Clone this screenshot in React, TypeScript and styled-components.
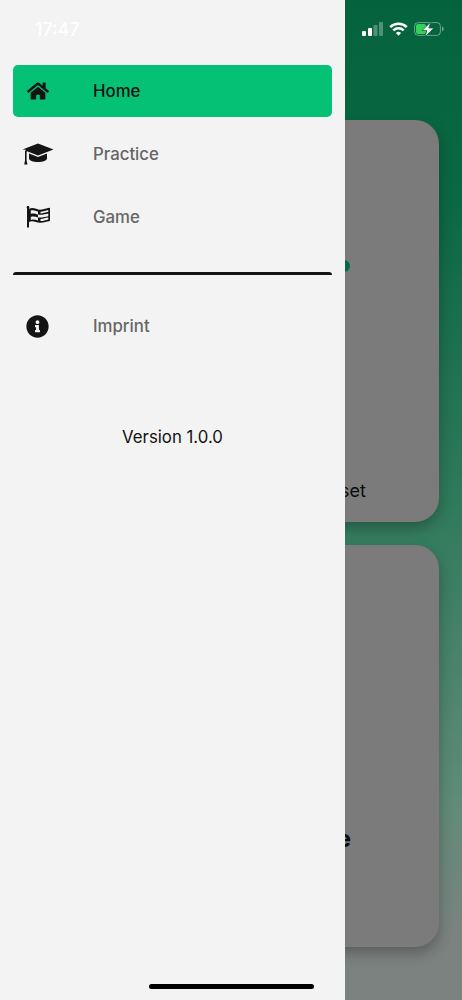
import React from "react";
import styled, { createGlobalStyle } from "styled-components";
import { FaHome, FaInfoCircle } from "react-icons/fa";

const GlobalStyle = createGlobalStyle`
  html, body {
    margin: 0;
    padding: 0;
    background: #7c8280;
  }
`;

const Page = styled.div`
  position: relative;
  width: 462px;
  height: 1000px;
  overflow: hidden;
  font-family: Inter, "Noto Sans", sans-serif;
  background: linear-gradient(180deg, #04633d 0%, #0b6844 20%, #2f7a5c 50%, #5f8b78 80%, #7c8280 94%);
`;

const Main = styled.main`
  display: flex;
  flex-direction: column;
  gap: 23px;
  padding: 120px 23px 0;
`;

const Card = styled.section<{ $bottom: number }>`
  display: flex;
  flex-direction: column;
  align-items: flex-end;
  box-sizing: border-box;
  height: 402px;
  padding-bottom: ${({ $bottom }) => $bottom}px;
  background: #7b7b7b;
  border-radius: 24px;
  box-shadow: 0 6px 14px rgba(0, 0, 0, 0.28);
`;

const Dot = styled.span`
  width: 12px;
  height: 12px;
  margin: 140px 89px 0 0;
  border-radius: 50%;
  background: #056b45;
`;

const ResetLabel = styled.span`
  margin: auto 73px 0 0;
  font-size: 18px;
  line-height: 22px;
  color: #0c0c0c;
`;

const GameLabel = styled.span`
  margin: auto 88px 0 0;
  font-size: 24px;
  line-height: 30px;
  font-weight: 700;
  color: #0c0c0c;
`;

const Drawer = styled.nav`
  position: absolute;
  inset: 0 auto 0 0;
  display: flex;
  flex-direction: column;
  box-sizing: border-box;
  width: 345px;
  padding: 65px 13px 0;
  background: #f3f3f3;
`;

const MenuList = styled.div`
  display: flex;
  flex-direction: column;
  gap: 11px;
`;

const MenuItem = styled.a<{ $active?: boolean }>`
  display: flex;
  align-items: center;
  height: 52px;
  border-radius: 5px;
  font-size: 16.8px;
  font-weight: 500;
  color: ${({ $active }) => ($active ? "#111111" : "#666666")};
  background: ${({ $active }) => ($active ? "#05c175" : "transparent")};
`;

const IconSlot = styled.span`
  display: flex;
  align-items: center;
  justify-content: center;
  flex: none;
  width: 49px;
  margin-right: 31px;
  color: #141414;
`;

const Divider = styled.hr`
  height: 3px;
  margin: 29px 0 25px;
  border: 0;
  border-radius: 3px 3px 0 0;
  background: #141414;
`;

const Version = styled.p`
  margin: 59px 0 0;
  font-size: 16.8px;
  line-height: 52px;
  text-align: center;
  color: #111111;
`;

const StatusBar = styled.div`
  position: absolute;
  inset: 0 0 auto 0;
  display: flex;
  align-items: center;
  justify-content: space-between;
  height: 58px;
  padding: 0 18px 0 35px;
`;

const Time = styled.span`
  font-size: 18px;
  font-weight: 500;
  color: #ffffff;
`;

const StatusIcons = styled.div`
  display: flex;
  align-items: center;
  gap: 6px;
`;

const HomeIndicator = styled.div`
  position: absolute;
  left: 149px;
  bottom: 11px;
  width: 165px;
  height: 5px;
  border-radius: 3px;
  background: #000000;
`;

const Signal = () => (
  <svg width="21" height="14" viewBox="0 0 21 14">
    <rect x="0" y="9" width="4" height="5" rx="1" fill="#fff" />
    <rect x="6" y="6" width="4" height="8" rx="1" fill="#fff" />
    <rect x="11.500" y="3" width="4" height="11" rx="1" fill="#fff" fillOpacity="0.3" />
    <rect x="17" y="0" width="4" height="14" rx="1" fill="#fff" fillOpacity="0.3" />
  </svg>
);

const Wifi = () => (
  <svg width="19" height="14" viewBox="0 0 19 14" fill="none" stroke="#fff" strokeWidth="2.5">
    <path d="M1.200 5.200a11.800 11.800 0 0 1 16.600 0" />
    <path d="M4.300 8.300a7.400 7.400 0 0 1 10.400 0" />
    <path d="M9.500 13.800 6.900 11a3.700 3.700 0 0 1 5.200 0Z" fill="#fff" stroke="none" />
  </svg>
);

const Battery = () => (
  <svg width="30" height="15" viewBox="0 0 30 15">
    <rect x="0.600" y="0.600" width="25.800" height="12.800" rx="3.600" fill="none" stroke="#fff" strokeOpacity="0.4" />
    <rect x="2" y="2" width="10" height="10" rx="2" fill="#34d058" />
    <path d="M28 4.600c1 .3 1.600 1.200 1.600 2.400S29 9.100 28 9.400Z" fill="#fff" fillOpacity="0.45" />
    <path d="M16.800 0 8 8.500h4.800l-1.800 6.500 8.800-9h-5Z" fill="#fff" stroke="#0a6541" strokeWidth="0.8" />
  </svg>
);

const GraduationCap = () => (
  <svg width="32" height="22" viewBox="0 0 32 22" fill="#141414">
    <path d="M16 0.500 31.500 6.500 16 12.500 5 8.300 4 8.800V6.800L0.500 6.500Z" />
    <path d="M7 10.500 16 14 25 10.500V15.500C25 17.400 21 19 16 19S7 17.400 7 15.500Z" />
    <path d="M3 7.500H4.600V17.500L5.500 21.500H2.200L3 17.500Z" />
  </svg>
);

const WavyFlag = () => (
  <svg width="25" height="22" viewBox="-1 0 25 22">
    <path d="M1 0.500H3V21.500H1Z" fill="#141414" />
    <circle cx="2" cy="1.200" r="1.300" fill="#141414" />
    <path
      d="M3 2.800C8 0.400 11 4.600 16 3.600 19 3 21.500 2.200 24 1.800V15C20 15.600 18 17 14 16.800 10 16.600 7 14.200 3 16Z"
      fill="#141414"
    />
    <path d="M4.800 4.600C7.500 3.500 9.500 5 12 5.600V8.400C9.500 7.800 7.500 6.800 4.800 7.800Z" fill="#f3f3f3" />
    <path d="M12 8.400C15.500 9.200 19 8 22.300 7.400V10.200C19 10.800 15.500 12 12 11.400Z" fill="#f3f3f3" />
    <path d="M4.800 11C7.500 10 9.500 11 12 11.400V14.600C9.500 13.800 7.500 13 4.800 14Z" fill="#f3f3f3" />
    <path d="M14.500 5.700C17 5.600 19.800 4.400 22.300 4V5.700C19.800 6.100 17 7.200 14.500 7.400Z" fill="#f3f3f3" />
    <path d="M14.500 13C17 12.900 19.800 11.800 22.300 11.600V13.400C19.800 13.800 17 15 14.500 15Z" fill="#f3f3f3" />
  </svg>
);

const App: React.FC = () => (
  <Page>
    <GlobalStyle />
    <Main>
      <Card $bottom={20}>
        <Dot />
        <ResetLabel>Reset</ResetLabel>
      </Card>
      <Card $bottom={93}>
        <GameLabel>Game</GameLabel>
      </Card>
    </Main>
    <Drawer>
      <MenuList>
        <MenuItem $active>
          <IconSlot>
            <FaHome size={22} />
          </IconSlot>
          Home
        </MenuItem>
        <MenuItem>
          <IconSlot>
            <GraduationCap />
          </IconSlot>
          Practice
        </MenuItem>
        <MenuItem>
          <IconSlot>
            <WavyFlag />
          </IconSlot>
          Game
        </MenuItem>
      </MenuList>
      <Divider />
      <MenuItem>
        <IconSlot>
          <FaInfoCircle size={23} />
        </IconSlot>
        Imprint
      </MenuItem>
      <Version>Version 1.0.0</Version>
    </Drawer>
    <StatusBar>
      <Time>17:47</Time>
      <StatusIcons>
        <Signal />
        <Wifi />
        <Battery />
      </StatusIcons>
    </StatusBar>
    <HomeIndicator />
  </Page>
);

export default App;
